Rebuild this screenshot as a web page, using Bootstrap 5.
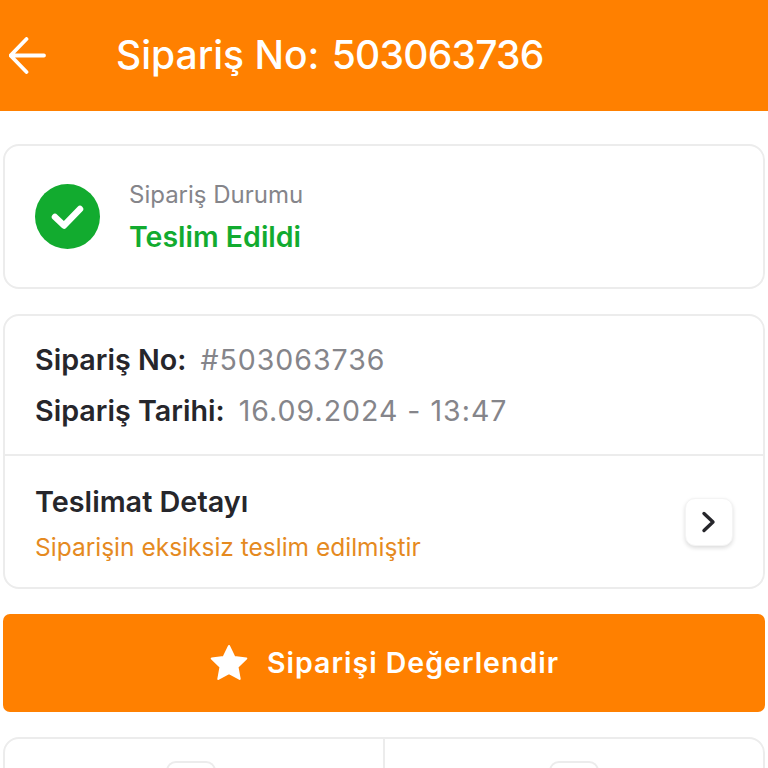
<!DOCTYPE html>
<html lang="tr">
  <head>
    <meta charset="UTF-8" />
    <meta name="viewport" content="width=device-width, initial-scale=1.0" />
    <title>Sipariş Detayı</title>
    <link rel="stylesheet" href="https://cdn.jsdelivr.net/npm/bootstrap@5.3.3/dist/css/bootstrap.min.css" />
    <style>
      html, body {
        height: 768px;
        overflow: hidden;
      }

      body {
        font-family: Inter, "Noto Sans", sans-serif;
        background-color: #fff;
      }

      .top-bar {
        height: 111px;
        background-color: #ff8000;
        color: #fff;
        padding-left: 9px;
      }

      .top-bar svg {
        width: 37px;
        height: 37px;
        margin-right: 70px;
      }

      .top-title {
        font-size: 39px;
        font-weight: 500;
        margin: 0;
      }

      .top-title span {
        letter-spacing: -0.750px;
        margin-left: 2px;
      }

      .page-body {
        padding: 33px 3px 0 3px;
      }

      .info-box {
        border: 2px solid #ececec;
        border-radius: 16px;
        margin-bottom: 25px;
      }

      .status-box {
        height: 145px;
        padding-left: 30px;
      }

      .status-icon {
        width: 65px;
        height: 65px;
        margin-right: 29px;
      }

      .status-label {
        font-size: 24px;
        color: #85858a;
        line-height: 28px;
        margin-bottom: 12px;
      }

      .status-value {
        font-size: 28.500px;
        font-weight: 600;
        color: #12ab2f;
        line-height: 32px;
      }

      .order-rows {
        padding: 26px 30px 0 30px;
        height: 140px;
        border-bottom: 2px solid #ececec;
      }

      .order-row {
        font-size: 28.500px;
        line-height: 36px;
        margin-bottom: 15px;
      }

      .order-row b {
        font-size: 28.700px;
        font-weight: 600;
        color: #26262b;
        margin-right: 14px;
      }

      .order-row span {
        color: #85858a;
        letter-spacing: 1px;
      }

      .delivery-row {
        height: 131px;
        padding: 4px 30px 0 30px;
      }

      .delivery-title {
        font-size: 28.800px;
        font-weight: 600;
        color: #26262b;
        line-height: 32px;
        margin-bottom: 15px;
      }

      .delivery-note {
        font-size: 24.500px;
        color: #e58a1f;
        line-height: 28px;
      }

      .arrow-btn {
        width: 48px;
        height: 48px;
        margin-top: -3px;
        background-color: #fff;
        border: 1px solid #f4f4f4;
        border-radius: 10px;
        box-shadow: 0 2px 4px rgba(0, 0, 0, 0.14);
      }

      .rate-btn {
        height: 98px;
        background-color: #ff8000;
        border: 0;
        border-radius: 7px;
        color: #fff;
        font-size: 28.500px;
        font-weight: 600;
        letter-spacing: 1px;
        margin-bottom: 25px;
      }

      .rate-btn svg {
        width: 40px;
        height: 40px;
        margin-right: 18px;
      }

      .bottom-box {
        height: 90px;
      }

      .bottom-col {
        padding-top: 22px;
      }

      .bottom-col:first-child {
        padding-right: 7px;
      }

      .bottom-col + .bottom-col {
        border-left: 2px solid #ececec;
        margin-left: -1px;
      }

      .mini-btn {
        width: 50px;
        height: 50px;
        border: 2px solid #ececec;
        border-radius: 10px;
      }
    </style>
  </head>
  <body>
    <!-- Header -->
    <div class="top-bar d-flex align-items-center">
      <svg viewBox="0 0 37 37" fill="none" stroke="#fff" stroke-width="3.800" stroke-linecap="round" stroke-linejoin="round">
        <path d="M35 18.500H2M17.500 2 1.500 18.500 17.500 35" />
      </svg>
      <h1 class="top-title">Sipariş No: <span>503063736</span></h1>
    </div>

    <div class="page-body">
      <!-- Status -->
      <div class="info-box status-box d-flex align-items-center">
        <svg class="status-icon" viewBox="0 0 65 65">
          <circle cx="32.500" cy="32.500" r="32.500" fill="#12ab2f" />
          <path d="M20 33l9 8.500L45 25" fill="none" stroke="#fff" stroke-width="6.500" stroke-linecap="round" stroke-linejoin="round" />
        </svg>
        <div>
          <div class="status-label">Sipariş Durumu</div>
          <div class="status-value">Teslim Edildi</div>
        </div>
      </div>

      <!-- Order details -->
      <div class="info-box">
        <div class="order-rows">
          <div class="order-row"><b>Sipariş No:</b><span>#503063736</span></div>
          <div class="order-row"><b>Sipariş Tarihi:</b><span>16.09.2024 - 13:47</span></div>
        </div>
        <div class="delivery-row d-flex align-items-center justify-content-between">
          <div>
            <div class="delivery-title">Teslimat Detayı</div>
            <div class="delivery-note">Siparişin eksiksiz teslim edilmiştir</div>
          </div>
          <div class="arrow-btn d-flex align-items-center justify-content-center">
            <svg width="16" height="22" viewBox="0 0 16 22" fill="none" stroke="#26262b" stroke-width="3.400" stroke-linecap="round" stroke-linejoin="round">
              <path d="M3 2.500 12 11 3 19.500" />
            </svg>
          </div>
        </div>
      </div>

      <!-- Rate button -->
      <button type="button" class="btn rate-btn w-100 d-flex align-items-center justify-content-center">
        <svg viewBox="0 0 40 40">
          <path d="M20 3l5.300 11 12 1.600-8.800 8.300 2.200 12L20 30l-10.700 5.900 2.200-12-8.800-8.300 12-1.600z" fill="#fff" stroke="#fff" stroke-width="2" stroke-linejoin="round" />
        </svg>
        Siparişi Değerlendir
      </button>

      <!-- Bottom actions, cut off by the window -->
      <div class="info-box bottom-box row g-0">
        <div class="col-6 bottom-col d-flex justify-content-center"><div class="mini-btn"></div></div>
        <div class="col-6 bottom-col d-flex justify-content-center"><div class="mini-btn"></div></div>
      </div>
    </div>

    <script src="https://cdn.jsdelivr.net/npm/bootstrap@5.3.3/dist/js/bootstrap.bundle.min.js"></script>
  </body>
</html>
